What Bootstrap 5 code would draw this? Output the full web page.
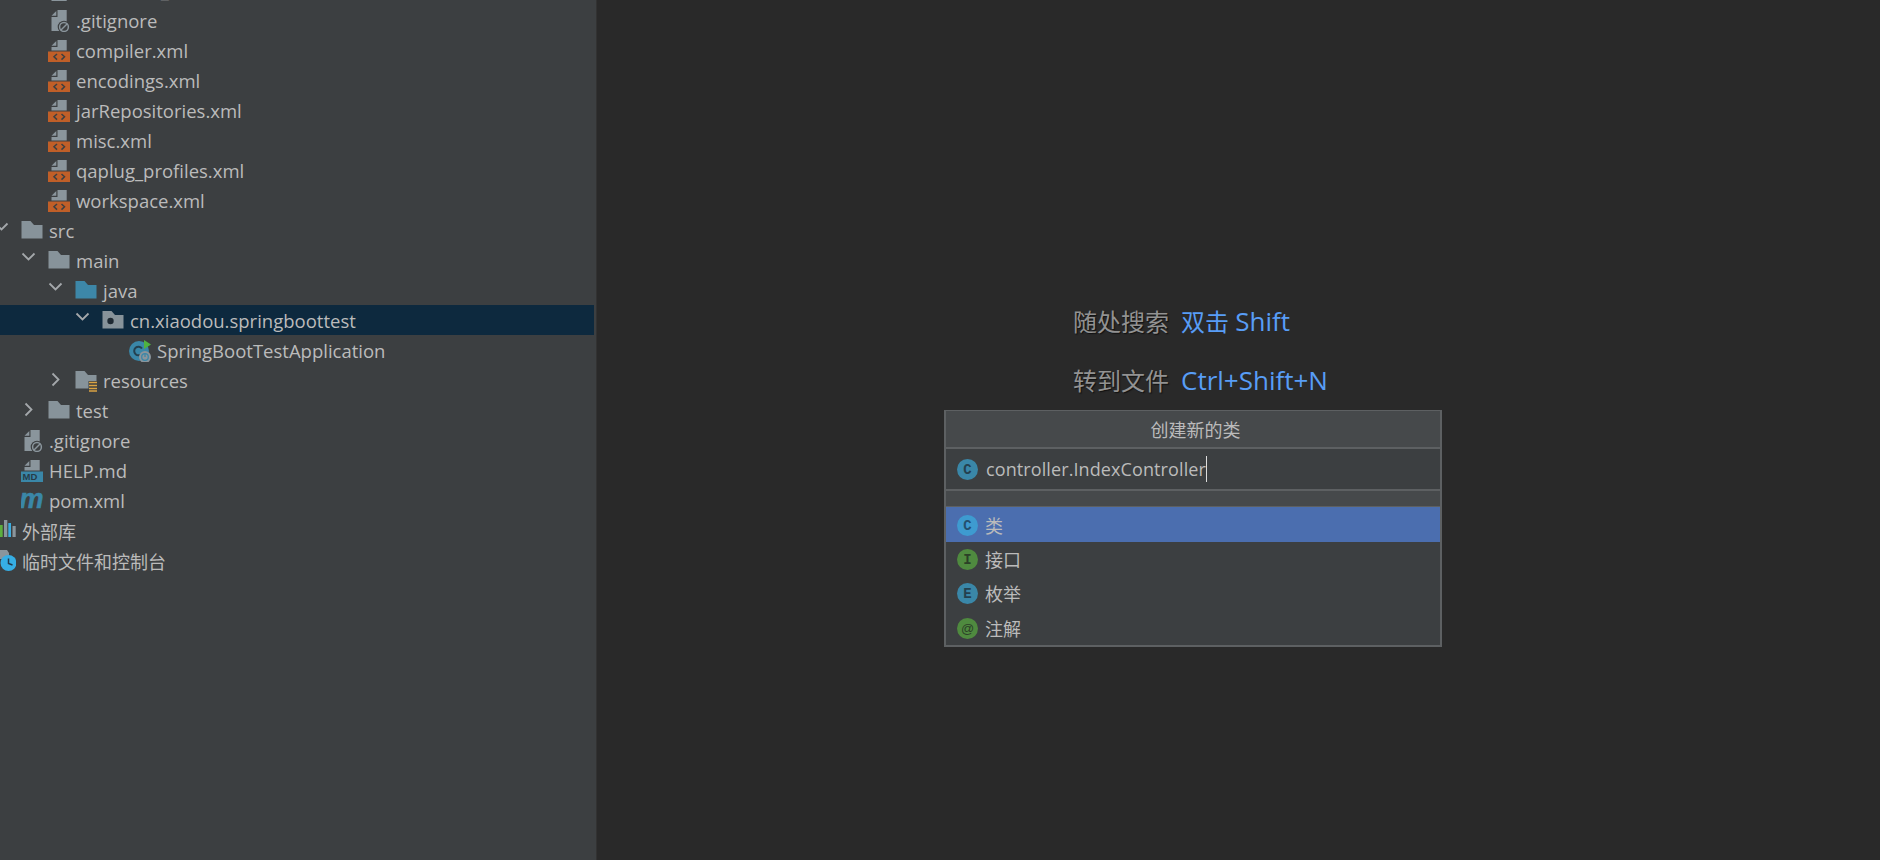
<!doctype html>
<html lang="zh-CN">
<head>
<meta charset="utf-8">
<title>IDE</title>
<link href="https://cdn.jsdelivr.net/npm/bootstrap@5.3.0/dist/css/bootstrap.min.css" rel="stylesheet">
<style>
html,body{height:100%;margin:0;background:#292929;overflow:hidden}
body{font-family:"Open Sans","Noto Sans CJK SC",sans-serif;font-size:18px;color:#bbb}
.ide-shell{height:860px;width:1880px}
.side-pane{width:596px;flex:none;background:#3c3f41;overflow:hidden;height:860px;border-right:1px solid #323232;box-sizing:content-box}
.tree-list{margin:-25px 0 0 -33px;width:627px}
.tree-row{height:30px;white-space:nowrap}
.tree-row.sel{background:#0d293e}
.lv1{padding-left:27px}.lv2{padding-left:54px}.lv3{padding-left:81px}.lv4{padding-left:108px}.lv5{padding-left:135px}
.chev-slot{width:27px;flex:none}
.tree-ico{width:22px;height:22px;flex:none;margin-right:6px;margin-top:2px}
.tree-txt{font-size:18.5px;line-height:30px;padding-top:2px;color:#bbb}
.tree-txt.cjk{font-size:18px;padding-top:4px}
.tree-txt.clip-top{padding-top:0}
.main-pane{background:#292929;height:860px}
.hint-box{position:absolute;left:1073px;top:299px;font-size:24px}
.hint-row{height:58px;line-height:46px;white-space:nowrap;color:#929292;text-shadow:1px 1px 1px #111}
.hint-row.up{line-height:44px}
.hint-key{color:#589df6;margin-left:12px;text-shadow:none}
.hint-lat{font-size:26px}
.new-dlg{position:absolute;left:944px;top:410px;width:498px;height:237px;background:#3c3f41;border:2px solid #5d6062;border-top-width:1px;border-bottom-width:2px}
.dlg-title{height:36px;background:#46494b;line-height:39px;padding-left:5px;text-align:center;border-bottom:2px solid #5d6062;box-sizing:content-box}
.dlg-input{height:40px;border-bottom:2px solid #5d6062;box-sizing:content-box;padding-left:11px}
.dlg-band{height:15px;background:#46494b;border-bottom:1px solid #5d6062;box-sizing:content-box}
.kind-row{height:34.3px;padding-left:11px}
.kind-row.on{background:#4b6eaf;height:35px}
.kind-ico{width:21px;height:21px;flex:none}
.kind-row .kind-ico{margin-top:1px}
.kind-name{margin-left:7px;margin-top:3px}
.input-txt{margin-left:8px;color:#bbb;border-right:1px solid #ddd;line-height:26px;height:26px;letter-spacing:.1px}
.ico-txt{font-family:"Liberation Mono",monospace;font-weight:700;font-size:14px}
.at-txt{font-family:"Liberation Sans",sans-serif;font-size:13px;font-weight:400}
.md-txt{font-family:"Liberation Sans",sans-serif;font-weight:700;font-size:9.5px}
.mvn-txt{font-family:"Liberation Sans",sans-serif;font-weight:700;font-style:italic;font-size:27px}
</style>
</head>
<body>
<svg width="0" height="0" class="d-block position-absolute">
<defs>
<symbol id="i-chd" viewBox="0 0 27 30"><path d="M1.500 8.500 L7.500 14.500 L13.500 8.500" fill="none" stroke="#a4a8ab" stroke-width="1.800"/></symbol>
<symbol id="i-chr" viewBox="0 0 27 30"><path d="M4.500 8.500 L10.500 14.500 L4.500 20.500" fill="none" stroke="#a4a8ab" stroke-width="1.800"/></symbol>
<symbol id="i-doc" viewBox="0 0 22 22"><path d="M9.500 0H18.700V10.500H3.500V7H9.500z" fill="#8a959c"/><path d="M3.500 5.700 8.300 1V5.700z" fill="#8a959c"/></symbol>
<symbol id="i-xml" viewBox="0 0 22 22"><use href="#i-doc"/><rect y="11.500" width="22.500" height="10.500" fill="#c05f28"/><path d="M9 14 6 16.800 9 19.600M13.500 14 16.500 16.800 13.500 19.600" fill="none" stroke="#3c3f41" stroke-width="1.500"/></symbol>
<symbol id="i-plain" viewBox="0 0 22 22"><path d="M9.500 0H18.700V21H3.500V7H9.500z" fill="#8a959c"/><path d="M3.500 5.700 8.300 1V5.700z" fill="#8a959c"/></symbol>
<symbol id="i-ign" viewBox="0 0 22 22"><use href="#i-plain"/><circle cx="16" cy="17" r="6.300" fill="#3c3f41"/><circle cx="16" cy="17" r="4.400" fill="none" stroke="#8a959c" stroke-width="1.500"/><path d="M13 20 19 14" stroke="#8a959c" stroke-width="1.500"/></symbol>
<symbol id="i-md" viewBox="0 0 22 22"><use href="#i-doc"/><rect y="11.500" width="22.500" height="10.500" fill="#3a87a8"/><text x="1.500" y="20.300" class="md-txt" fill="#263c48">MD</text></symbol>
<symbol id="i-dir" viewBox="0 0 22 22"><path d="M.5 1H9.500L13 5H21.500V18.500H.5z" fill="#87939a"/></symbol>
<symbol id="i-src" viewBox="0 0 22 22"><path d="M.5 1H9.500L13 5H21.500V18.500H.5z" fill="#3d87a8"/></symbol>
<symbol id="i-pkg" viewBox="0 0 22 22"><path d="M.5 1H9.500L13 5H21.500V18.500H.5z" fill="#87939a"/><circle cx="8.500" cy="11" r="3.200" fill="#1f2a33"/></symbol>
<symbol id="i-res" viewBox="0 0 22 22"><path d="M.5 1H9.500L13 5H21.500V11H13.500V18.500H.5z" fill="#87939a"/><path d="M14 12.500H22.500M14 15.500H22.500M14 18.500H22.500M14 21H22.500" stroke="#d9a343" stroke-width="1.600"/></symbol>
<symbol id="i-app" viewBox="0 0 22 22"><circle cx="10" cy="11" r="10" fill="#3a87a8"/><path d="M13 8.500A4.300 4.300 0 1 0 13 13.500" fill="none" stroke="#24404f" stroke-width="2"/><path d="M15 0V9L22 4.500z" fill="#4fb33f"/><circle cx="16" cy="17" r="6" fill="#8a959c"/><circle cx="16" cy="17" r="3.300" fill="none" stroke="#3a87a8" stroke-width="1.300"/><path d="M16 13.500V17" stroke="#3a87a8" stroke-width="1.300"/></symbol>
<symbol id="i-lib" viewBox="0 0 22 22"><rect x="5" y="5" width="3.700" height="12" fill="#5cae3e"/><rect x="10" y="0" width="3.300" height="17" fill="#8a959c"/><rect x="14.300" y="3" width="2.700" height="14" fill="#3bade0"/><rect x="18.500" y="6" width="3.200" height="11" fill="#8a959c"/></symbol>
<symbol id="i-tmp" viewBox="0 0 22 22"><path d="M5 0H13L15 3V9H5z" fill="#8a959c"/><circle cx="14.500" cy="13" r="8" fill="#36aee4"/><path d="M14.500 8.500V13.500L18.500 15" fill="none" stroke="#22384a" stroke-width="1.500"/></symbol>
</defs>
</svg>

<div class="ide-shell d-flex position-relative">
  <aside class="side-pane">
    <div class="tree-list">
      <div class="tree-row d-flex align-items-center lv2"><span class="chev-slot"></span><svg class="tree-ico"><use href="#i-plain"/></svg><span class="tree-txt clip-top">resources_local</span></div>
      <div class="tree-row d-flex align-items-center lv2"><span class="chev-slot"></span><svg class="tree-ico"><use href="#i-ign"/></svg><span class="tree-txt">.gitignore</span></div>
      <div class="tree-row d-flex align-items-center lv2"><span class="chev-slot"></span><svg class="tree-ico"><use href="#i-xml"/></svg><span class="tree-txt">compiler.xml</span></div>
      <div class="tree-row d-flex align-items-center lv2"><span class="chev-slot"></span><svg class="tree-ico"><use href="#i-xml"/></svg><span class="tree-txt">encodings.xml</span></div>
      <div class="tree-row d-flex align-items-center lv2"><span class="chev-slot"></span><svg class="tree-ico"><use href="#i-xml"/></svg><span class="tree-txt">jarRepositories.xml</span></div>
      <div class="tree-row d-flex align-items-center lv2"><span class="chev-slot"></span><svg class="tree-ico"><use href="#i-xml"/></svg><span class="tree-txt">misc.xml</span></div>
      <div class="tree-row d-flex align-items-center lv2"><span class="chev-slot"></span><svg class="tree-ico"><use href="#i-xml"/></svg><span class="tree-txt">qaplug_profiles.xml</span></div>
      <div class="tree-row d-flex align-items-center lv2"><span class="chev-slot"></span><svg class="tree-ico"><use href="#i-xml"/></svg><span class="tree-txt">workspace.xml</span></div>
      <div class="tree-row d-flex align-items-center lv1"><svg class="chev-slot" height="30"><use href="#i-chd"/></svg><svg class="tree-ico"><use href="#i-dir"/></svg><span class="tree-txt">src</span></div>
      <div class="tree-row d-flex align-items-center lv2"><svg class="chev-slot" height="30"><use href="#i-chd"/></svg><svg class="tree-ico"><use href="#i-dir"/></svg><span class="tree-txt">main</span></div>
      <div class="tree-row d-flex align-items-center lv3"><svg class="chev-slot" height="30"><use href="#i-chd"/></svg><svg class="tree-ico"><use href="#i-src"/></svg><span class="tree-txt">java</span></div>
      <div class="tree-row sel d-flex align-items-center lv4"><svg class="chev-slot" height="30"><use href="#i-chd"/></svg><svg class="tree-ico"><use href="#i-pkg"/></svg><span class="tree-txt">cn.xiaodou.springboottest</span></div>
      <div class="tree-row d-flex align-items-center lv5"><span class="chev-slot"></span><svg class="tree-ico"><use href="#i-app"/></svg><span class="tree-txt">SpringBootTestApplication</span></div>
      <div class="tree-row d-flex align-items-center lv3"><svg class="chev-slot" height="30"><use href="#i-chr"/></svg><svg class="tree-ico"><use href="#i-res"/></svg><span class="tree-txt">resources</span></div>
      <div class="tree-row d-flex align-items-center lv2"><svg class="chev-slot" height="30"><use href="#i-chr"/></svg><svg class="tree-ico"><use href="#i-dir"/></svg><span class="tree-txt">test</span></div>
      <div class="tree-row d-flex align-items-center lv1"><span class="chev-slot"></span><svg class="tree-ico"><use href="#i-ign"/></svg><span class="tree-txt">.gitignore</span></div>
      <div class="tree-row d-flex align-items-center lv1"><span class="chev-slot"></span><svg class="tree-ico"><use href="#i-md"/></svg><span class="tree-txt">HELP.md</span></div>
      <div class="tree-row d-flex align-items-center lv1"><span class="chev-slot"></span><svg class="tree-ico" viewBox="0 0 22 22"><text x="-1.500" y="18" class="mvn-txt" fill="#3a87a8" stroke="#3a87a8" stroke-width=".5">m</text></svg><span class="tree-txt">pom.xml</span></div>
      <div class="tree-row d-flex align-items-center"><span class="chev-slot"></span><svg class="tree-ico"><use href="#i-lib"/></svg><span class="tree-txt cjk">外部库</span></div>
      <div class="tree-row d-flex align-items-center"><span class="chev-slot"></span><svg class="tree-ico"><use href="#i-tmp"/></svg><span class="tree-txt cjk">临时文件和控制台</span></div>
    </div>
  </aside>
  <main class="main-pane flex-grow-1"></main>

  <div class="hint-box">
    <div class="hint-row up">随处搜索<span class="hint-key">双击 <span class="hint-lat">Shift</span></span></div>
    <div class="hint-row">转到文件<span class="hint-key hint-lat">Ctrl+Shift+N</span></div>
  </div>

  <div class="new-dlg">
    <div class="dlg-title">创建新的类</div>
    <div class="dlg-input d-flex align-items-center">
      <svg class="kind-ico" viewBox="0 0 21 21"><circle cx="10.500" cy="10.500" r="10.500" fill="#3a87a8"/><text x="10.500" y="15" text-anchor="middle" class="ico-txt" fill="#24404f">C</text></svg>
      <span class="input-txt">controller.IndexController</span>
    </div>
    <div class="dlg-band"></div>
    <div class="kind-row on d-flex align-items-center">
      <svg class="kind-ico" viewBox="0 0 21 21"><circle cx="10.500" cy="10.500" r="10.500" fill="#3e9bd0"/><text x="10.500" y="15" text-anchor="middle" class="ico-txt" fill="#24506f">C</text></svg>
      <span class="kind-name">类</span>
    </div>
    <div class="kind-row d-flex align-items-center">
      <svg class="kind-ico" viewBox="0 0 21 21"><circle cx="10.500" cy="10.500" r="10.500" fill="#4f8a3f"/><text x="10.500" y="15" text-anchor="middle" class="ico-txt" fill="#2b4027">I</text></svg>
      <span class="kind-name">接口</span>
    </div>
    <div class="kind-row d-flex align-items-center">
      <svg class="kind-ico" viewBox="0 0 21 21"><circle cx="10.500" cy="10.500" r="10.500" fill="#3a87a8"/><text x="10.500" y="15" text-anchor="middle" class="ico-txt" fill="#24404f">E</text></svg>
      <span class="kind-name">枚举</span>
    </div>
    <div class="kind-row d-flex align-items-center">
      <svg class="kind-ico" viewBox="0 0 21 21"><circle cx="10.500" cy="10.500" r="10.500" fill="#4f8a3f"/><text x="10.500" y="15" text-anchor="middle" class="at-txt" fill="#2b4027">@</text></svg>
      <span class="kind-name">注解</span>
    </div>
  </div>
</div>
<script src="https://cdn.jsdelivr.net/npm/bootstrap@5.3.0/dist/js/bootstrap.bundle.min.js"></script>
</body>
</html>
